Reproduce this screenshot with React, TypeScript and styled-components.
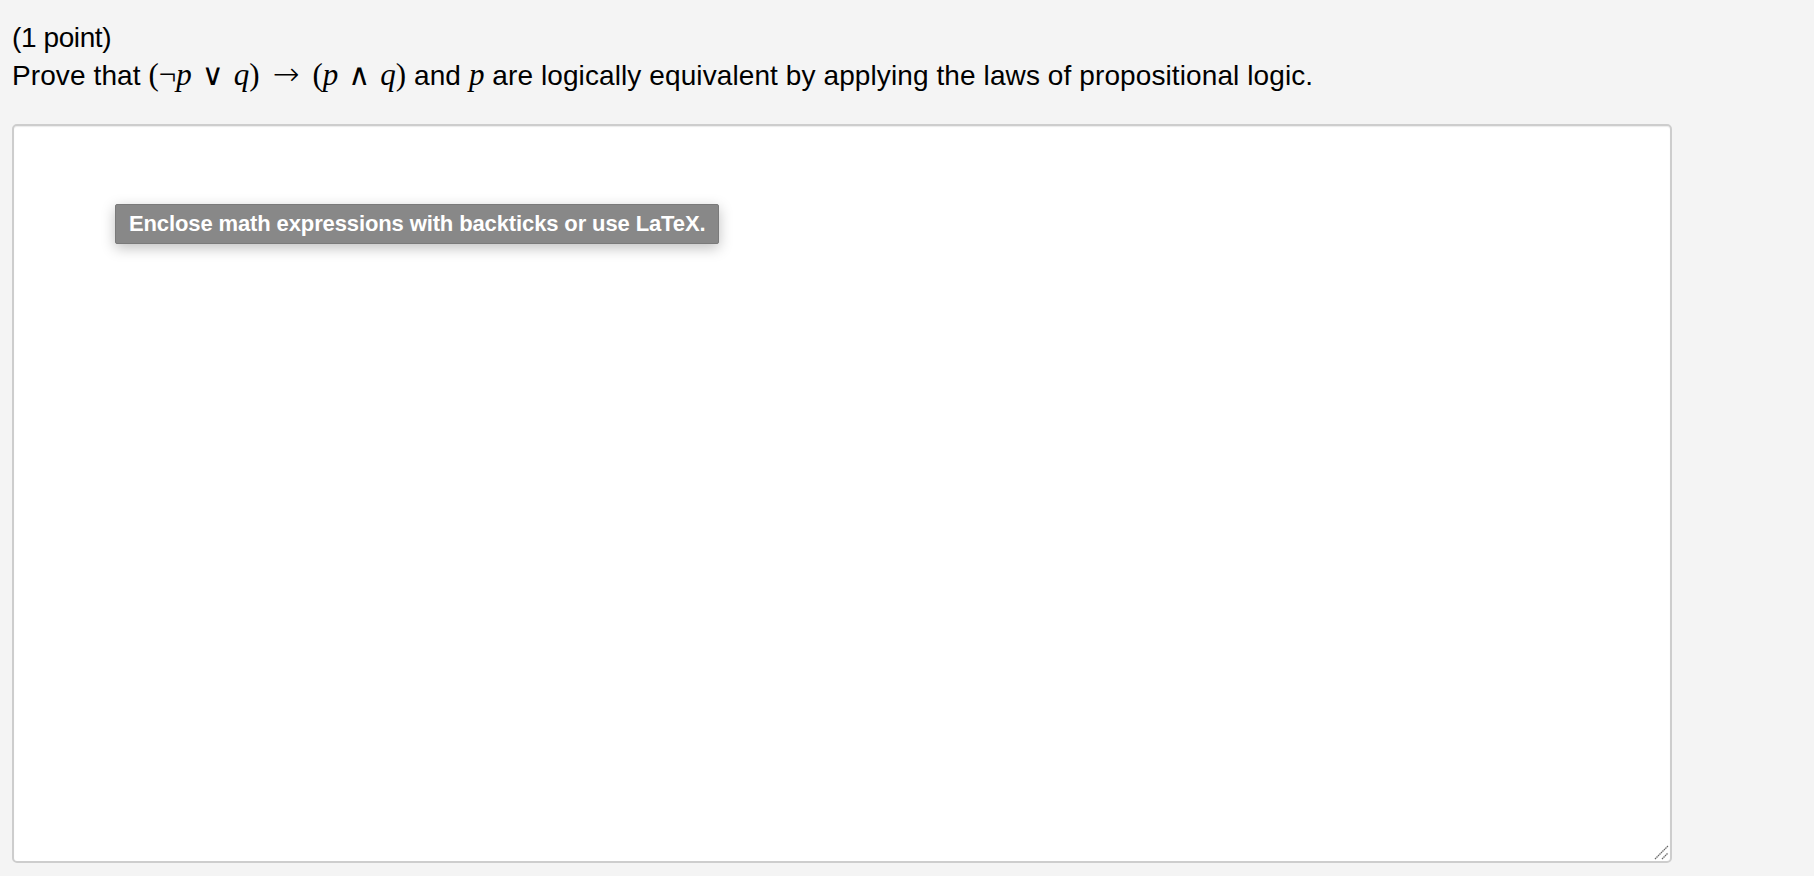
import React from 'react'
import styled, { createGlobalStyle } from 'styled-components'

const GlobalStyle = createGlobalStyle`
  html, body {
    margin: 0;
    padding: 0;
    background: #f4f4f4;
  }
  body {
    font-family: "Liberation Sans", Arial, sans-serif;
    color: #000;
  }
`

const Page = styled.div`
  padding: 19px 12px 12px 12px;
`

const Points = styled.div`
  font-size: 28px;
  line-height: 38px;
  letter-spacing: -0.4px;
`

const Question = styled.div`
  font-size: 28px;
  line-height: 38px;
  margin-bottom: 29px;
  letter-spacing: 0.1px;
`

const Math = styled.span`
  font-family: "Liberation Serif", "DejaVu Serif", "Times New Roman", serif;
  font-size: 31px;
  line-height: 1;
  letter-spacing: 0;
`

const Var = styled.i`
  font-style: italic;
`

const Op = styled.span<{ $space?: number; $size?: number }>`
  font-family: "DejaVu Sans", "DejaVu Serif", serif;
  font-weight: 200;
  font-size: ${(p) => p.$size ?? 30}px;
  margin: 0 ${(p) => p.$space ?? 10}px;
`

const AnswerWrap = styled.div`
  position: relative;
  width: 1660px;
`

const Answer = styled.textarea`
  display: block;
  box-sizing: border-box;
  width: 1660px;
  height: 739px;
  border: 2px solid #cdcdcd;
  border-radius: 5px;
  background: #fff;
  box-shadow: inset 0 1px 1px rgba(0, 0, 0, 0.08);
  font-family: "Liberation Sans", Arial, sans-serif;
  font-size: 20px;
  outline: none;
  resize: none;
`

const Grip = styled.svg`
  position: absolute;
  right: 3px;
  bottom: 3px;
  width: 16px;
  height: 16px;
`

const Tooltip = styled.div`
  position: absolute;
  left: 103px;
  top: 80px;
  box-sizing: border-box;
  padding: 0 13px;
  height: 40px;
  display: flex;
  align-items: center;
  background: #888888;
  border: 1px solid #7a7a7a;
  color: #fff;
  font-family: "Liberation Sans", Arial, sans-serif;
  font-weight: bold;
  font-size: 22px;
  letter-spacing: -0.12px;
  border-radius: 2px;
  box-shadow: 0 4px 14px rgba(0, 0, 0, 0.25);
  white-space: nowrap;
`

export default function App() {
  return (
    <Page>
      <GlobalStyle />
      <Points>(1 point)</Points>
      <Question>
        Prove that{' '}
        <Math>
          (¬<Var>p</Var>
          <Op>∨</Op>
          <Var>q</Var>)<Op $space={13} $size={32}>→</Op>(<Var>p</Var>
          <Op>∧</Op>
          <Var>q</Var>)
        </Math>{' '}
        and{' '}
        <Math>
          <Var>p</Var>
        </Math>{' '}
        are logically equivalent by applying the laws of propositional logic.
      </Question>
      <AnswerWrap>
        <Answer />
        <Grip viewBox="0 0 16 16">
          <line x1="2" y1="15" x2="15" y2="2" stroke="#666" strokeWidth="1.3" strokeDasharray="1.5 0.6" />
          <line x1="9" y1="15" x2="15" y2="9" stroke="#666" strokeWidth="1.3" strokeDasharray="1.5 0.6" />
        </Grip>
        <Tooltip>Enclose math expressions with backticks or use LaTeX.</Tooltip>
      </AnswerWrap>
    </Page>
  )
}
